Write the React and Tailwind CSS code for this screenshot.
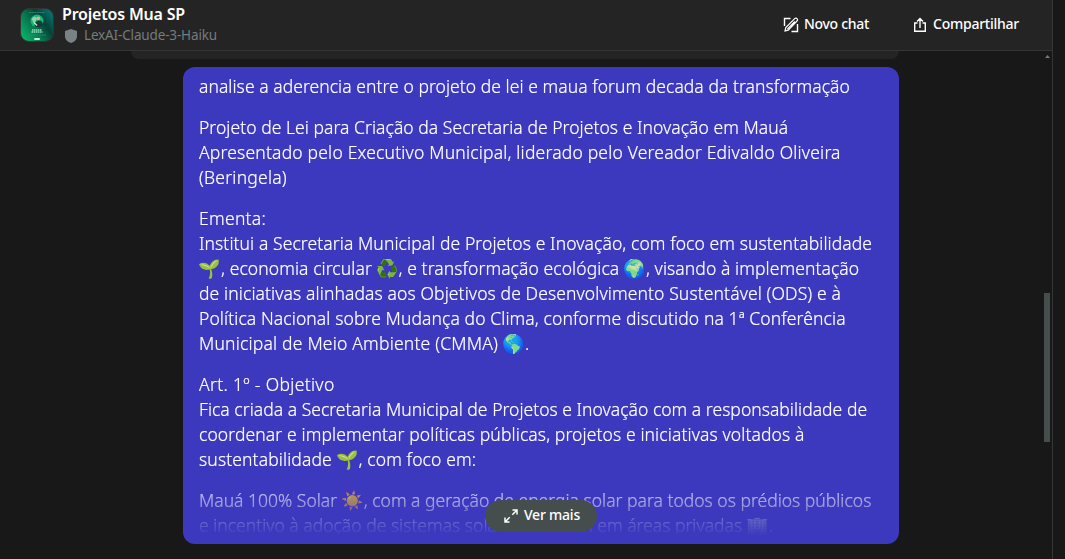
import React from 'react';

function Emoji({ children }) {
  return (
    <span className="-ml-px mr-px inline-block h-[25px] w-[22px] text-center align-top text-[18px] leading-[25px] tracking-normal [-webkit-text-stroke:0]">
      {children}
    </span>
  );
}

function Line({ children, className }) {
  return <div className={'h-[25px] whitespace-pre ' + className}>{children}</div>;
}

function Avatar() {
  return (
    <svg width="34" height="34" viewBox="0 0 34 34" className="shrink-0">
      <defs>
        <linearGradient id="av" x1="0" y1="0.8" x2="1" y2="0.1">
          <stop offset="0" stopColor="#08b468" />
          <stop offset="0.35" stopColor="#087a50" />
          <stop offset="0.65" stopColor="#054238" />
          <stop offset="1" stopColor="#087c78" />
        </linearGradient>
      </defs>
      <rect x="0.5" y="0.5" width="33" height="33" rx="8.5" fill="url(#av)" stroke="#333" />
      <path d="M9 4.500h16" stroke="#3c8f78" strokeWidth="0.8" strokeDasharray="2 0.6" />
      <circle cx="17" cy="13" r="6.5" fill="#12b876" />
      <path d="M11.500 10.500l3-2 2.500 1.500-1 3-2.500 2z" fill="#86d6ae" />
      <circle cx="18.300" cy="10.300" r="1.900" fill="#c7b5a0" />
      <path d="M14.500 18.500c0-4 2-6 4.500-6s4 2 4 4.500c-2 2.500-5 3-8.500 1.500z" fill="#183c35" />
      <path d="M14 14.500l3 3" stroke="#d4e5dc" strokeWidth="1.300" />
      <path d="M12 22h10M11.500 24h11" stroke="#8ce0bd" strokeWidth="1.300" strokeDasharray="1.500 0.500" />
      <path d="M8 27h18" stroke="#2b9b78" strokeWidth="0.700" strokeDasharray="2 0.700" />
      <path d="M14.300 31h5.500" stroke="#e4f2ec" strokeWidth="1.800" />
    </svg>
  );
}

function Header() {
  return (
    <header className="flex h-[51px] shrink-0 items-start border-b border-[#353535] bg-[#242424] pl-5">
      <div className="mt-2">
        <Avatar />
      </div>
      <div className="ml-2 w-[300px] pt-1">
        <div className="h-5 whitespace-nowrap text-[16px] font-semibold leading-5 tracking-[-0.19px] text-white">
          Projetos Mua SP
        </div>
        <div className="flex h-[23px] items-center">
          <svg width="14" height="16" viewBox="0 0 14 16" className="ml-[2px]">
            <path d="M7 1l6 2v5.500c0 3-2.500 5.300-6 6.500-3.500-1.200-6-3.500-6-6.500V3z" fill="#798284" />
          </svg>
          <span className="ml-[6px] whitespace-nowrap text-[13.5px] font-normal leading-[23px] tracking-[-0.15px] text-[#747c7d]">
            LexAI-Claude-3-Haiku
          </span>
        </div>
      </div>
      <div className="ml-auto flex h-[47px] items-center pr-[33px] text-[14px] font-medium text-white">
        <div className="flex items-center">
          <svg width="16" height="16" viewBox="0 0 16 16" fill="none" stroke="#fff" strokeWidth="1.400" className="mt-[3px]">
            <path d="M7.500 1.500H1.500v7.500M14.500 7v7.500H8.500" />
            <path d="M2 14l.8-3.400L11.700 1.700a1.500 1.500 0 0 1 2.300 2.300L5.200 13.100z M4.300 12.100L11.800 4.500" strokeWidth="1.200" />
          </svg>
          <span className="ml-[5px] w-[65px] whitespace-nowrap tracking-[-0.3px]">Novo chat</span>
        </div>
        <div className="ml-11 flex items-center">
          <svg width="14" height="16" viewBox="0 0 14 16" fill="none" stroke="#fff" strokeWidth="1.400" className="mt-[3px]">
            <path d="M4.500 6H1.700v8.200h10.600V6H9.500M7 11V2M4 4.600L7 1.600l3 3" />
          </svg>
          <span className="ml-[6px] w-[86px] whitespace-nowrap tracking-[-0.25px]">Compartilhar</span>
        </div>
      </div>
    </header>
  );
}

function Message() {
  return (
    <div className="relative ml-[183px] mt-2 h-[477px] w-[716px] shrink-0 rounded-xl bg-[#3d39bf] px-4 pt-[7px] pb-2">
      <div className="flex h-[462px] flex-col gap-4 overflow-hidden text-[17.5px] font-light leading-[25px] text-white [-webkit-text-stroke:0.2px_white] [mask-image:linear-gradient(to_bottom,black_399px,transparent_462px)]">
        <div className="shrink-0">
          <Line className="tracking-[0.055px]">analise a aderencia entre o projeto de lei e maua forum decada da transformação</Line>
        </div>
        <div className="shrink-0">
          <Line className="tracking-[0.05px]">Projeto de Lei para Criação da Secretaria de Projetos e Inovação em Mauá</Line>
          <Line className="tracking-[0.19px]">Apresentado pelo Executivo Municipal, liderado pelo Vereador Edivaldo Oliveira</Line>
          <Line className="tracking-[0.22px]">(Beringela)</Line>
        </div>
        <div className="shrink-0">
          <Line className="tracking-[0.3px]">Ementa:</Line>
          <Line className="tracking-[0.09px]">Institui a Secretaria Municipal de Projetos e Inovação, com foco em sustentabilidade</Line>
          <Line className="tracking-[0.085px]"><Emoji>🌱</Emoji>, economia circular <Emoji>♻️</Emoji>, e transformação ecológica <Emoji>🌍</Emoji>, visando à implementação</Line>
          <Line className="tracking-[0.11px]">de iniciativas alinhadas aos Objetivos de Desenvolvimento Sustentável (ODS) e à</Line>
          <Line className="tracking-[0.1px]">Política Nacional sobre Mudança do Clima, conforme discutido na 1ª Conferência</Line>
          <Line className="tracking-[0.2px]">Municipal de Meio Ambiente (CMMA) <Emoji>🌎</Emoji>.</Line>
        </div>
        <div className="shrink-0">
          <Line className="tracking-[0.33px]">Art. 1º - Objetivo</Line>
          <Line className="tracking-[0.03px]">Fica criada a Secretaria Municipal de Projetos e Inovação com a responsabilidade de</Line>
          <Line className="tracking-[0.11px]">coordenar e implementar políticas públicas, projetos e iniciativas voltados à</Line>
          <Line className="tracking-[0.12px]">sustentabilidade <Emoji>🌱</Emoji>, com foco em:</Line>
        </div>
        <div className="shrink-0">
          <Line className="tracking-[0.01px]">Mauá 100% Solar <Emoji>☀️</Emoji>, com a geração de energia solar para todos os prédios públicos</Line>
          <Line className="tracking-[0.01px]">e incentivo à adoção de sistemas solares também em áreas privadas <Emoji>🏢</Emoji>.</Line>
        </div>
      </div>
      <button className="absolute bottom-3 left-[302px] flex h-8 w-28 items-center rounded-full bg-[#464e4d] pl-[18px] text-[14px] font-medium text-white">
        <svg width="16" height="16" viewBox="0 0 16 16" fill="none" stroke="#fff" strokeWidth="1.500">
          <path d="M9.500 2H14v4.500M14 2L9.300 6.700M6.500 14H2V9.500M2 14l4.700-4.700" />
        </svg>
        <span className="ml-[5px] pb-[3px] whitespace-nowrap tracking-[-0.22px]">Ver mais</span>
      </button>
    </div>
  );
}

export default function App() {
  return (
    <div className="flex h-[559px] w-[1065px] overflow-hidden bg-[#181818] font-['Noto_Sans',sans-serif]">
      <div className="flex w-[1053px] flex-col border-r border-[#353535]">
        <Header />
        <main className="flex min-h-0 flex-1">
          <div className="flex w-[1043px] flex-col">
            <div className="ml-[131px] h-2 w-[768px] shrink-0 rounded-b-xl bg-[#242424]" />
            <Message />
          </div>
          <div className="flex w-[9px] flex-col items-center">
            <svg width="5" height="3" viewBox="0 0 5 3" className="mt-1">
              <path d="M2.500 0L5 3H0z" fill="#747c7b" />
            </svg>
            <div className="mt-[235px] ml-[-1px] h-[149px] w-[6px] bg-[#464e4d]" />
          </div>
        </main>
      </div>
    </div>
  );
}
